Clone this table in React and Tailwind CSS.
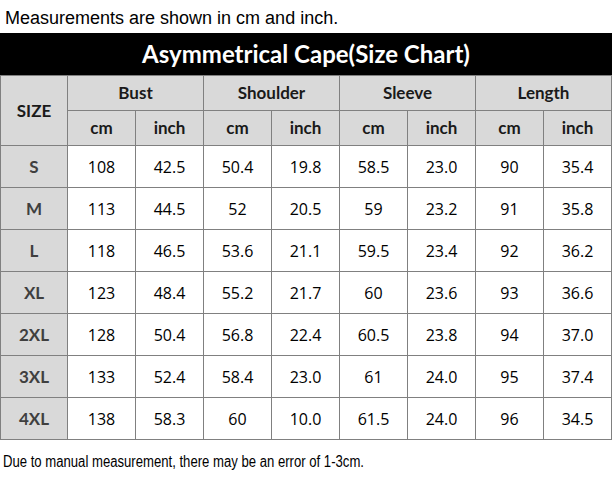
import React from "react";

const rows = [
  ["S", "108", "42.5", "50.4", "19.8", "58.5", "23.0", "90", "35.4"],
  ["M", "113", "44.5", "52", "20.5", "59", "23.2", "91", "35.8"],
  ["L", "118", "46.5", "53.6", "21.1", "59.5", "23.4", "92", "36.2"],
  ["XL", "123", "48.4", "55.2", "21.7", "60", "23.6", "93", "36.6"],
  ["2XL", "128", "50.4", "56.8", "22.4", "60.5", "23.8", "94", "37.0"],
  ["3XL", "133", "52.4", "58.4", "23.0", "61", "24.0", "95", "37.4"],
  ["4XL", "138", "58.3", "60", "10.0", "61.5", "24.0", "96", "34.5"],
];

const groups = ["Bust", "Shoulder", "Sleeve", "Length"];

const head =
  "bg-[#d9d9d9] flex items-center justify-center text-[17px] font-bold text-[#1a1a1a] font-['Lato','Open_Sans',sans-serif]";

export default function App() {
  return (
    <div className="w-[613px] h-[483px] bg-white overflow-hidden">
      <div className="h-[33px] pt-[8px] pl-[5px] text-[18px] leading-[20px] text-black font-['Liberation_Sans',Arial,sans-serif]">
        Measurements are shown in cm and inch.
      </div>
      <div className="w-[612px] h-[42px] bg-black text-white flex items-center justify-center text-[24px] font-bold font-['Lato','Open_Sans',sans-serif]">
        Asymmetrical Cape(Size Chart)
      </div>
      <div className="w-[612px] grid grid-cols-[66px_repeat(8,67px)] grid-rows-[34px_34px_repeat(7,41px)] gap-[1px] p-[1px] bg-[#808080] font-['Open_Sans',sans-serif]">
        <div className={`row-span-2 ${head}`}>SIZE</div>
        {groups.map((g) => (
          <div key={g} className={`col-span-2 ${head}`}>
            {g}
          </div>
        ))}
        {groups.map((g) => (
          <React.Fragment key={g + "u"}>
            <div className={head}>cm</div>
            <div className={head}>inch</div>
          </React.Fragment>
        ))}
        {rows.map((r) => (
          <React.Fragment key={r[0]}>
            <div className="bg-[#d9d9d9] flex items-center justify-center text-[17px] font-bold text-[#3f3f3f] font-['Lato','Open_Sans',sans-serif]">
              {r[0]}
            </div>
            {r.slice(1).map((v, i) => (
              <div
                key={i}
                className="bg-white flex items-center justify-center text-[16px] text-black"
              >
                {v}
              </div>
            ))}
          </React.Fragment>
        ))}
      </div>
      <div className="mt-[12px] pl-[3px] text-[16px] leading-[20px] text-black whitespace-nowrap font-['Liberation_Sans',Arial,sans-serif]">
        <span className="inline-block origin-left scale-x-[0.82]">
          Due to manual measurement, there may be an error of 1-3cm.
        </span>
      </div>
    </div>
  );
}
